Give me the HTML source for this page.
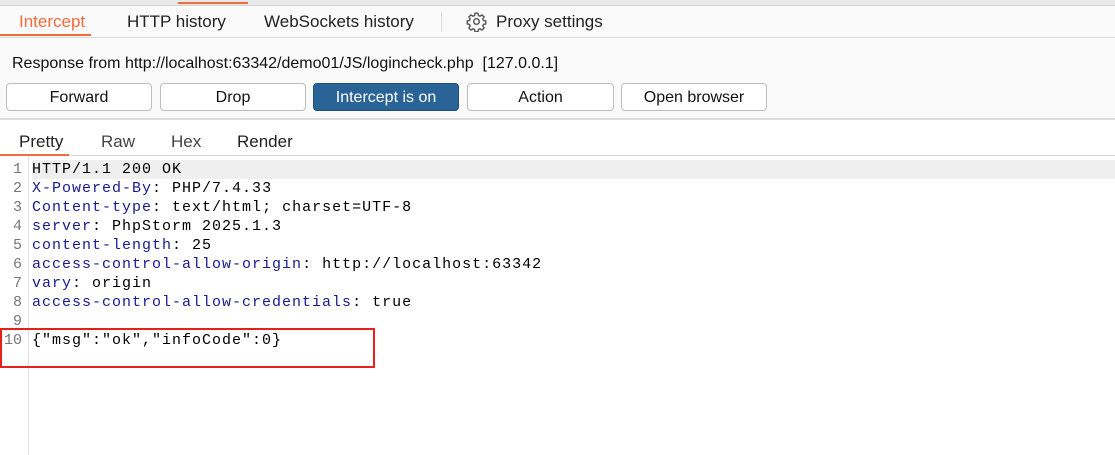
<!DOCTYPE html>
<html><head><style>
body{margin:0;width:1115px;height:455px;overflow:hidden;background:#fff;font-family:"Liberation Sans",sans-serif;position:relative}
.a{position:absolute}
.tab{position:absolute;top:12px;font-size:17px;color:#222}
.btn{position:absolute;top:83px;height:26px;width:144px;border:1px solid #bdbdbd;border-radius:4px;background:#fff;text-align:center;line-height:27px;font-size:16px;color:#111}
.code{position:absolute;left:0;font-family:"Liberation Mono",monospace;font-size:15px;letter-spacing:1px;white-space:pre;line-height:19px}
.n{color:#777;display:inline-block;width:22px;text-align:right;letter-spacing:0}
.k{color:#1a1a8c}
</style></head><body>
<div class="a" style="left:0;top:0;width:1115px;height:5px;background:#e8e8e8;border-bottom:1px solid #d4d4d4"></div>
<div class="a" style="left:178px;top:2px;width:70px;height:2px;background:#f26b3a"></div>
<div class="a" style="left:0;top:6px;width:1115px;height:112px;background:#fafafa"></div>
<div class="a" style="left:0;top:37px;width:1115px;height:1px;background:#d8d8d8"></div>
<div class="tab" style="left:19px;color:#f26b3a">Intercept</div>
<div class="a" style="left:0;top:34px;width:91px;height:2px;background:#f26b3a"></div>
<div class="tab" style="left:127px">HTTP history</div>
<div class="tab" style="left:264px">WebSockets history</div>
<div class="a" style="left:441px;top:12px;width:1px;height:20px;background:#ddd"></div>
<svg class="a" style="left:466px;top:11px" width="21" height="21" viewBox="0 0 24 24" fill="none" stroke="#555" stroke-width="1.6"><circle cx="12" cy="12" r="3.2"/><path d="M10.3 2.5h3.4l.5 2.6 1.9.8 2.2-1.5 2.4 2.4-1.5 2.2.8 1.9 2.6.5v3.4l-2.6.5-.8 1.9 1.5 2.2-2.4 2.4-2.2-1.5-1.9.8-.5 2.6h-3.4l-.5-2.6-1.9-.8-2.2 1.5-2.4-2.4 1.5-2.2-.8-1.9-2.6-.5v-3.4l2.6-.5.8-1.9-1.5-2.2 2.4-2.4 2.2 1.5 1.9-.8z"/></svg>
<div class="tab" style="left:496px">Proxy settings</div>
<div class="a" style="left:12px;top:55px;font-size:16px;color:#111">Response from http://localhost:63342/demo01/JS/logincheck.php&nbsp;&nbsp;[127.0.0.1]</div>
<div class="btn" style="left:6px">Forward</div>
<div class="btn" style="left:160px">Drop</div>
<div class="btn" style="left:313px;background:#2a6496;border-color:#1f4e78;color:#fff">Intercept is on</div>
<div class="btn" style="left:467px;width:145px">Action</div>
<div class="btn" style="left:621px">Open browser</div>
<div class="a" style="left:0;top:118px;width:1115px;height:2px;background:#dedede"></div>
<div class="tab" style="left:19px;top:132px">Pretty</div>
<div class="tab" style="left:101px;top:132px;color:#444">Raw</div>
<div class="tab" style="left:171px;top:132px;color:#444">Hex</div>
<div class="tab" style="left:237px;top:132px">Render</div>
<div class="a" style="left:0;top:154px;width:69px;height:2px;background:#f26b3a"></div>
<div class="a" style="left:69px;top:155px;width:1046px;height:1px;background:#d8d8d8"></div>
<div class="a" style="left:32px;top:160px;width:1083px;height:19px;background:#efefef"></div>
<div class="a" style="left:28px;top:156px;width:1px;height:299px;background:#e0e0e0"></div>
<div class="code" style="top:160px"><span class="n">1</span> HTTP/1.1 200 OK
<span class="n">2</span> <span class="k">X-Powered-By</span>: PHP/7.4.33
<span class="n">3</span> <span class="k">Content-type</span>: text/html; charset=UTF-8
<span class="n">4</span> <span class="k">server</span>: PhpStorm 2025.1.3
<span class="n">5</span> <span class="k">content-length</span>: 25
<span class="n">6</span> <span class="k">access-control-allow-origin</span>: http://localhost:63342
<span class="n">7</span> <span class="k">vary</span>: origin
<span class="n">8</span> <span class="k">access-control-allow-credentials</span>: true
<span class="n">9</span>
<span class="n">10</span> {"msg":"ok","infoCode":0}</div>
<div class="a" style="left:0;top:328px;width:371px;height:36px;border:2px solid #e8201a"></div>
</body></html>
